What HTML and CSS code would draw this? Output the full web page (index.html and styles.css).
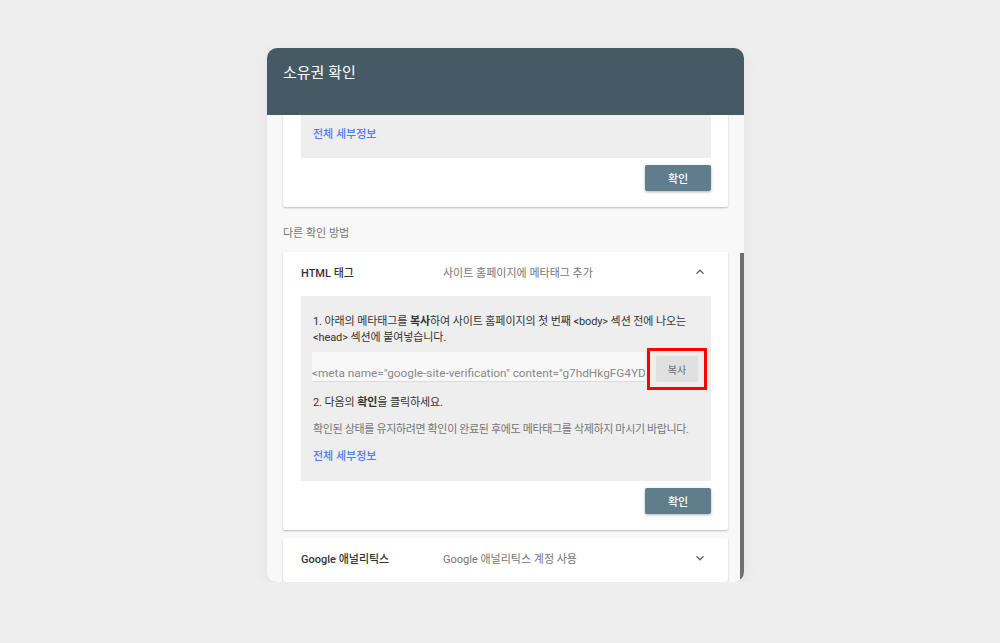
FILE: index.html
```html
<!DOCTYPE html>
<html lang="ko">
<head>
  <meta charset="UTF-8">
  <title>소유권 확인</title>
  <link rel="stylesheet" href="styles.css">
</head>
<body>

<div class="dialog">
  <!-- Header -->
  <div class="dialog-header">소유권 확인</div>

  <div class="dialog-body">
    <div class="scroll-content">
      <!-- Recommended method (scrolled up) -->
      <div class="card card-cut">
        <div class="detail-box detail-box-cut">
          <a class="link" href="#">전체 세부정보</a>
        </div>
        <div class="action-row">
          <button class="confirm-btn">확인</button>
        </div>
      </div>

      <div class="section-label">다른 확인 방법</div>

      <!-- HTML tag -->
      <div class="card">
        <div class="method-row">
          <span class="method-name">HTML 태그</span>
          <span class="method-desc">사이트 홈페이지에 메타태그 추가</span>
          <svg class="chevron" viewBox="0 0 24 24" width="16" height="16"><path d="M7.4 15.4L12 10.8l4.6 4.6L18 14l-6-6-6 6z"/></svg>
        </div>
        <div class="detail-box">
          <p class="step">1. 아래의 메타태그를 <strong>복사</strong>하여 사이트 홈페이지의 첫 번째 &lt;body&gt; 섹션 전에 나오는<br>&lt;head&gt; 섹션에 붙여넣습니다.</p>
          <div class="copy-row">
            <div class="meta-field">&lt;meta name="google-site-verification" content="g7hdHkgFG4YD</div>
            <div class="highlight">
              <button class="copy-btn">복사</button>
            </div>
          </div>
          <p class="step">2. 다음의 <strong>확인</strong>을 클릭하세요.</p>
          <p class="note">확인된 상태를 유지하려면 확인이 완료된 후에도 메타태그를 삭제하지 마시기 바랍니다.</p>
          <a class="link" href="#">전체 세부정보</a>
        </div>
        <div class="action-row">
          <button class="confirm-btn">확인</button>
        </div>
      </div>

      <!-- Google Analytics -->
      <div class="card">
        <div class="method-row">
          <span class="method-name">Google 애널리틱스</span>
          <span class="method-desc">Google 애널리틱스 계정 사용</span>
          <svg class="chevron" viewBox="0 0 24 24" width="16" height="16"><path d="M7.4 8.6L12 13.2l4.6-4.6L18 10l-6 6-6-6z"/></svg>
        </div>
      </div>
    </div>

    <div class="scroll-track"><div class="scroll-thumb"></div></div>
  </div>
</div>

</body>
</html>
```

FILE: styles.css
```css
* { box-sizing: border-box; }

body {
  margin: 0;
  padding: 48px 0 0 267px;
  background: #eeeeee;
  font-family: Roboto, "Noto Sans CJK KR", sans-serif;
  color: #333;
}

.dialog {
  width: 477px;
  height: 534px;
  border-radius: 10px;
  overflow: hidden;
  background: #f8f8f8;
  box-shadow: 0 4px 16px rgba(0,0,0,0.06);
  display: flex;
  flex-direction: column;
}

.dialog-header {
  height: 67px;
  flex: none;
  background: #455a64;
  color: #fff;
  font-size: 15px;
  padding: 15px 16px 0;
  line-height: 20px;
}

.dialog-body {
  flex: 1;
  min-height: 0;
  display: flex;
  overflow: hidden;
}

.scroll-content {
  flex: 1;
  min-width: 0;
  padding: 0 12px 0 16px;
}

.scroll-track {
  width: 4px;
  flex: none;
}

.scroll-thumb {
  margin-top: 138px;
  height: 327px;
  background: #6f6f6f;
  border-radius: 0 0 2px 2px;
}

.card {
  background: #fff;
  border-radius: 2px;
  box-shadow: 0 1px 2px rgba(0,0,0,0.25);
  margin-bottom: 8px;
}

.card-cut {
  border-radius: 0 0 2px 2px;
}

.detail-box {
  margin: 0 17px 0 18px;
  background: #eeeeee;
  padding: 18px 12px 16px;
  font-size: 11px;
  line-height: 16px;
}

.detail-box-cut {
  padding: 12px 12px 15px;
}

.link {
  color: #4a80f5;
  font-weight: 500;
  text-decoration: none;
  font-size: 11px;
}

.action-row {
  display: flex;
  justify-content: flex-end;
  padding: 7px 17px 16px;
}

.confirm-btn {
  width: 66px;
  height: 26px;
  border: none;
  border-radius: 2px;
  background: #607d8b;
  color: #fff;
  font-family: inherit;
  font-size: 11px;
  font-weight: 500;
  box-shadow: 0 1px 3px rgba(0,0,0,0.3);
}

.section-label {
  font-size: 11px;
  color: #757575;
  padding: 12px 0 11px;
  line-height: 14px;
}

.method-row {
  display: flex;
  align-items: center;
  height: 44px;
  padding: 0 20px 4px 18px;
  font-size: 11px;
}

.method-name {
  width: 142px;
  font-weight: 500;
  color: #333;
}

.method-desc {
  flex: 1;
  color: #757575;
}

.chevron { fill: #666; }

.step {
  margin: 0;
  color: #333;
  letter-spacing: -0.1px;
}

.step strong { font-weight: 700; }

.copy-row {
  display: flex;
  align-items: flex-start;
  margin: 2px -8px 5px -1px;
}

.meta-field {
  flex: 1;
  min-width: 0;
  height: 30px;
  margin-top: 4px;
  padding-top: 13px;
  background: #f8f8f8;
  border-bottom: 1px solid #dcdcdc;
  font-size: 11.8px;
  line-height: 16px;
  color: #888;
  white-space: nowrap;
  overflow: hidden;
}

.highlight {
  margin-left: 2px;
  border: 3px solid #f00;
  padding: 5px 6px;
}

.copy-btn {
  display: block;
  width: 42px;
  height: 26px;
  border: none;
  border-radius: 2px;
  background: #e0e0e0;
  color: #666;
  font-family: inherit;
  font-size: 10px;
}

.note {
  margin: 11px 0 11px;
  color: #757575;
  letter-spacing: -0.35px;
  white-space: nowrap;
}
```
